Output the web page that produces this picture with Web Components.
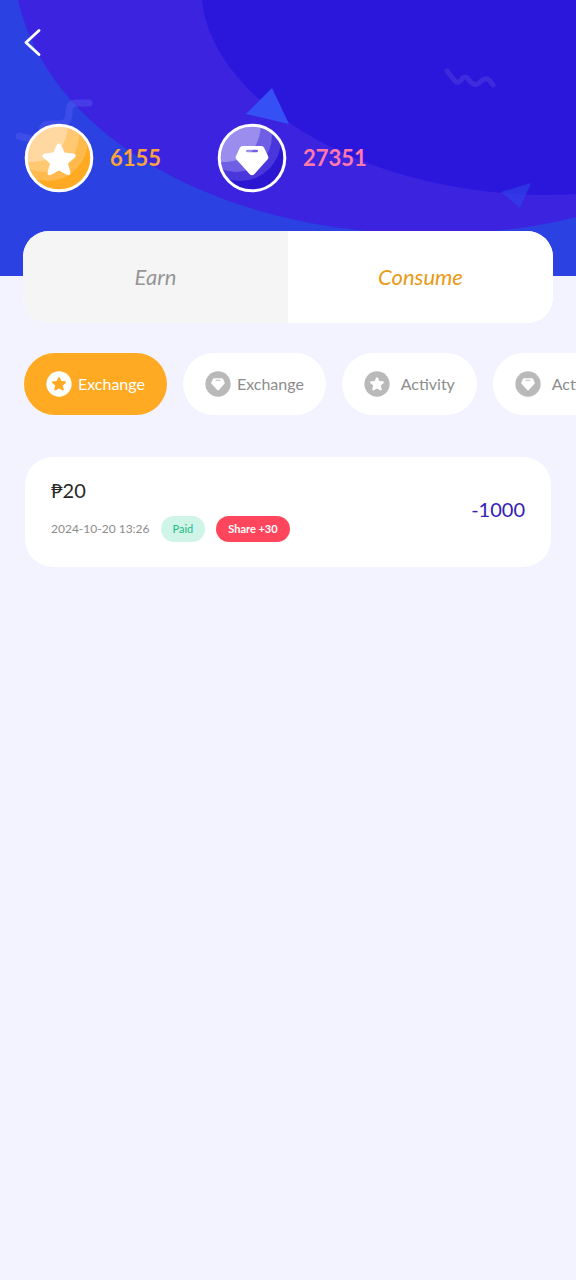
<!DOCTYPE html>
<html lang="en">
<head>
<meta charset="utf-8">
<meta name="viewport" content="width=device-width, initial-scale=1">
<title>Points history</title>
<style>
  body { margin: 0; min-height: 100vh; background: #f2f3ff; font-family: Lato, "Noto Sans", sans-serif; }
</style>
</head>
<body>
<points-page></points-page>
<script>
const STAR = '<path d="M0-15.500C1.300-15.500 2-14.600 2.500-13.500L5.500-6.500L14-5.600C17-5.200 17.500-3 15.500-1.200L9 4.500L11.300 13C12 16 9.800 17 7.800 15.800L0 11.500L-7.800 15.800C-9.800 17-12 16-11.300 13L-9 4.500L-15.500-1.200C-17.500-3-17-5.200-14-5.600L-5.500-6.500L-2.500-13.500C-2-14.600-1.300-15.500 0-15.500Z"/>';
const GEM = '<path fill-rule="evenodd" d="M-9.500-13H9.500Q11-13 12-11.500L16-3Q17-1 15.500 .5L2 15.500Q0 17-2 15.500L-15.500 .5Q-17-1-16-3L-12-11.500Q-11-13-9.500-13ZM-4.500-9.300Q-6-9.300-6-8Q-6-6.800-4.500-6.800H4.500Q6-6.800 6-8Q6-9.300 4.500-9.300Z"/>';

function define(name, template) {
  customElements.define(name, class extends HTMLElement {
    connectedCallback() {
      if (this.shadowRoot) return;
      this.attachShadow({ mode: 'open' }).innerHTML = template(this);
    }
  });
}

// Decorative backdrop of the header
define('hero-backdrop', () => `
  <style>
    :host { display: block; }
    svg { display: block; width: 100%; height: 100%; }
  </style>
  <svg viewBox="0 0 576 276" preserveAspectRatio="none" aria-hidden="true">
    <path fill="#2b41e2" d="M0 0H576V276H0Z"/>
    <path fill="#3b23e0" d="M18 0C50 140 225 234 430 234Q510 234 576 217V0Z"/>
    <path fill="#2b17db" d="M202 0C212 100 360 195 550 195L576 194V0Z"/>
    <path fill="#3550f4" d="M272 88L289 124L246 114Z"/>
    <path fill="#3040e8" opacity=".7" d="M501 192L531 183L520 208Z"/>
    <path fill="none" stroke="#fff" stroke-opacity=".09" stroke-width="5" stroke-linecap="round" stroke-linejoin="round" d="M447 71L455 81Q458 84 461 80Q465 74 469 80Q475 88 480 82Q486 76 490 81L493 85"/>
    <path fill="none" stroke="#5a60f0" stroke-opacity=".4" stroke-width="7" stroke-linecap="round" stroke-linejoin="round" d="M19 136L31 139Q42 141 42 132Q42 124 50 124H60Q68 124 69 115V111Q69 103 77 103H89"/>
  </svg>`);

define('back-button', () => `
  <style>
    :host { display: flex; }
    button { display: flex; padding: 0; border: 0; background: none; cursor: pointer; }
  </style>
  <button type="button" aria-label="Back">
    <svg width="20" height="28" viewBox="0 0 20 28" fill="none" stroke="#fff" stroke-width="2.8" stroke-linecap="round" stroke-linejoin="round"><path d="M15 2.500L2 14.500L15 26.500"/></svg>
  </button>`);

define('coin-balance', el => {
  const star = el.getAttribute('kind') === 'star';
  const c = star ? ['#ffaa22', '#ffba4e', '#ffc871', '#ffd7a0'] : ['#2b17d2', '#4937dc', '#6f5fe4', '#9a8dee'];
  return `
  <style>
    :host { display: flex; align-items: center; gap: 16px; font-size: 22px; line-height: 28px; font-weight: 700; color: ${star ? '#faa43c' : '#ff78ae'}; }
    svg { display: block; flex: none; }
  </style>
  <svg width="70" height="70" viewBox="-35 -35 70 70" aria-hidden="true">
    <defs><clipPath id="c"><circle r="33"/></clipPath></defs>
    <g clip-path="url(#c)">
      <circle r="34" fill="${c[0]}"/>
      <circle cx="-12" cy="-18" r="41" fill="${c[1]}"/>
      <circle cx="-16" cy="-22" r="36" fill="${c[2]}"/>
      <path d="M-35 4Q-8 5 1-8Q9-20 9-35H-35Z" fill="${c[3]}"/>
    </g>
    <circle r="32.800" fill="none" stroke="#fff" stroke-width="3"/>
    <g fill="#fff" transform="translate(0 1)">${star ? STAR : GEM}</g>
  </svg>
  <slot></slot>`;
});

define('mode-tabs', () => `
  <style>
    :host { display: grid; grid-template-columns: 1fr 1fr; height: 92px; border-radius: 26px; overflow: hidden; background: #fff; }
  </style>
  <slot></slot>`);

define('mode-tab', () => `
  <style>
    :host { display: grid; background: #f5f5f5; color: #969696; }
    :host([selected]) { background: #fff; color: #e89a15; }
    button { border: 0; padding: 0; background: none; color: inherit; font: italic 22px/28px Lato, sans-serif; cursor: pointer; }
  </style>
  <button type="button"><slot></slot></button>`);

define('filter-chip', el => `
  <style>
    :host { display: block; flex: none; --face: #fff; --disc: #b9b9b9; --ink: #8c8c8c; }
    :host([selected]) { --face: #ffaa22; --disc: #fff; --ink: #fff; }
    button { display: flex; align-items: center; height: 62px; padding: 0 22px; border: 0; border-radius: 31px; background: var(--face); color: var(--ink); font: 16px/20px Lato, sans-serif; cursor: pointer; }
    span { min-width: 65px; padding-left: 6px; text-align: right; box-sizing: border-box; }
    svg { display: block; }
    .disc { fill: var(--disc); }
    .mark { fill: var(--face); }
  </style>
  <button type="button">
    <svg width="26" height="26" viewBox="-35 -35 70 70" aria-hidden="true">
      <circle class="disc" r="34"/><g class="mark" transform="translate(0 -1) scale(1.120)">${el.getAttribute('kind') === 'star' ? STAR : GEM}</g>
    </svg>
    <span><slot></slot></span>
  </button>`);

define('status-pill', () => `
  <style>
    :host { display: block; padding: 0 12px; border-radius: 13px; background: #cef5e7; color: #28b98a; font-size: 11px; line-height: 26px; white-space: nowrap; }
    :host([tone="share"]) { background: #ff465c; color: #fff; font-weight: 700; }
  </style>
  <slot></slot>`);

define('record-card', () => `
  <style>
    :host { display: flex; align-items: center; justify-content: space-between; min-height: 110px; box-sizing: border-box; padding: 18px 26px 24px; border-radius: 28px; background: #fff; }
    .info { display: grid; gap: 12px; }
    .title { font-size: 20px; line-height: 28px; color: #282828; }
    .meta { display: flex; align-items: center; gap: 11px; font-size: 12px; line-height: 26px; color: #8c8c8c; }
    .amount { font-size: 20px; line-height: 28px; color: #3520b4; }
  </style>
  <div class="info">
    <div class="title"><slot name="title"></slot></div>
    <div class="meta"><slot name="meta"></slot></div>
  </div>
  <div class="amount"><slot name="amount"></slot></div>`);

define('points-page', () => `
  <style>
    :host { display: block; }
    header { position: relative; height: 276px; box-sizing: border-box; padding: 28px 24px; display: flex; flex-direction: column; gap: 67px; }
    hero-backdrop { position: absolute; inset: 0; }
    back-button, .balances { position: relative; }
    .balances { display: grid; grid-template-columns: 193px 1fr; }
    mode-tabs { position: relative; margin: -45px 23px 0; }
    nav { display: flex; gap: 16px; margin-top: 30px; padding: 0 24px; overflow: hidden; }
    main { padding: 42px 25px; }
  </style>
  <header>
    <hero-backdrop></hero-backdrop>
    <back-button></back-button>
    <div class="balances">
      <coin-balance kind="star">6155</coin-balance>
      <coin-balance kind="gem">27351</coin-balance>
    </div>
  </header>
  <mode-tabs>
    <mode-tab>Earn</mode-tab>
    <mode-tab selected>Consume</mode-tab>
  </mode-tabs>
  <nav aria-label="Filters">
    <filter-chip kind="star" selected>Exchange</filter-chip>
    <filter-chip kind="gem">Exchange</filter-chip>
    <filter-chip kind="star">Activity</filter-chip>
    <filter-chip kind="gem">Activity</filter-chip>
  </nav>
  <main>
    <record-card>
      <span slot="title">₱20</span>
      <time slot="meta" datetime="2024-10-20T13:26">2024-10-20 13:26</time>
      <status-pill slot="meta">Paid</status-pill>
      <status-pill slot="meta" tone="share">Share +30</status-pill>
      <span slot="amount">-1000</span>
    </record-card>
  </main>`);
</script>
</body>
</html>
